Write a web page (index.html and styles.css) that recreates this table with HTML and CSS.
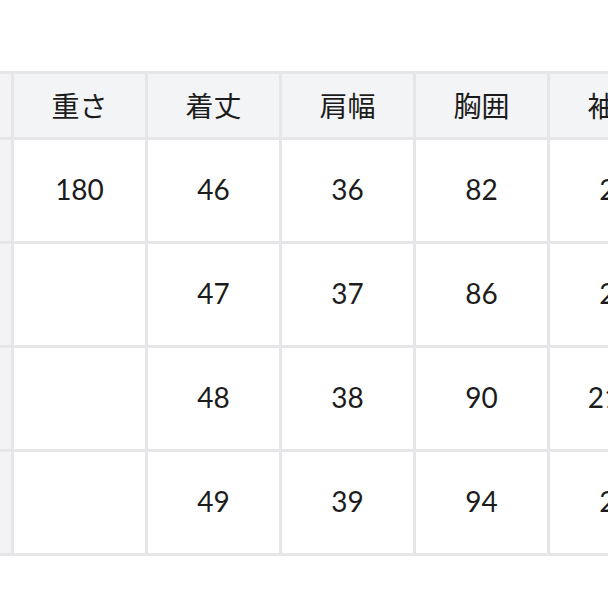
FILE: index.html
```html
<!DOCTYPE html>
<html lang="ja">
<head>
<meta charset="utf-8">
<link rel="stylesheet" href="styles.css">
</head>
<body>
<div class="frame">
  <div class="table">
    <div class="cell head side"></div>
    <div class="cell head">重さ</div>
    <div class="cell head">着丈</div>
    <div class="cell head">肩幅</div>
    <div class="cell head">胸囲</div>
    <div class="cell head">袖丈</div>

    <div class="cell side"></div>
    <div class="cell">180</div>
    <div class="cell">46</div>
    <div class="cell">36</div>
    <div class="cell">82</div>
    <div class="cell">20</div>

    <div class="cell side"></div>
    <div class="cell"></div>
    <div class="cell">47</div>
    <div class="cell">37</div>
    <div class="cell">86</div>
    <div class="cell">21</div>

    <div class="cell side"></div>
    <div class="cell"></div>
    <div class="cell">48</div>
    <div class="cell">38</div>
    <div class="cell">90</div>
    <div class="cell">21.5</div>

    <div class="cell side"></div>
    <div class="cell"></div>
    <div class="cell">49</div>
    <div class="cell">39</div>
    <div class="cell">94</div>
    <div class="cell">22</div>
  </div>
</div>
</body>
</html>
```

FILE: styles.css
```css
html, body {
  margin: 0;
  padding: 0;
  background: #ffffff;
}
body {
  width: 608px;
  height: 608px;
  overflow: hidden;
  font-family: Lato, "Noto Sans CJK JP", sans-serif;
  color: #1c1c1c;
}
.frame {
  padding-top: 71px;
  width: 608px;
  overflow: hidden;
}
.table {
  display: grid;
  width: max-content;
  grid-template-columns: 11px repeat(5, 131px);
  grid-template-rows: 63px repeat(4, 101px);
  gap: 3px;
  padding: 3px 0;
  background: #e6e6e8;
}
.cell {
  background: #ffffff;
  display: flex;
  align-items: center;
  justify-content: center;
  font-size: 28px;
  line-height: 1;
  padding-bottom: 3px;
}
.head {
  background: #f3f4f6;
  font-family: "Noto Sans CJK JP", sans-serif;
  font-size: 28px;
  padding-bottom: 2px;
}
.side {
  background: #f3f3f5;
}
```
